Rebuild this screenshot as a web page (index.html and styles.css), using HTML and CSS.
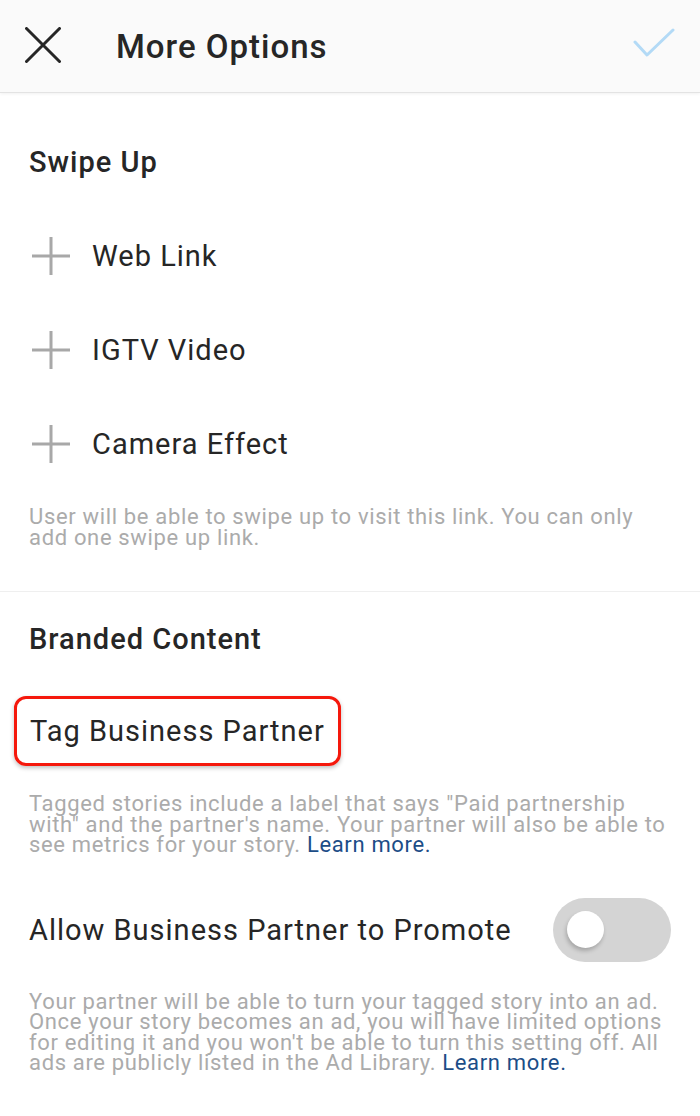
FILE: index.html
```html
<!DOCTYPE html>
<html lang="en">
<head>
<meta charset="utf-8">
<title>More Options</title>
<link rel="stylesheet" href="styles.css">
</head>
<body>
<div class="screen">
  <header class="topbar">
    <svg class="close" width="36" height="36" viewBox="0 0 36 36" aria-hidden="true">
      <path d="M1.5 1.5 L34.5 34.5 M34.5 1.5 L1.5 34.5" stroke="#262626" stroke-width="3" stroke-linecap="round" fill="none"/>
    </svg>
    <h1 class="title">More Options</h1>
    <svg class="done" width="42" height="30" viewBox="0 0 42 30" aria-hidden="true">
      <path d="M2 14 L14 27 L40 2" stroke="#b3daf6" stroke-width="3" stroke-linecap="round" stroke-linejoin="round" fill="none"/>
    </svg>
  </header>

  <section class="section">
    <h2 class="heading">Swipe Up</h2>
    <div class="row add">
      <svg class="plus" width="40" height="40" viewBox="0 0 40 40" aria-hidden="true"><path d="M20 1 V39 M1 20 H39" stroke="#a8a8a8" stroke-width="3" fill="none"/></svg>
      <span>Web Link</span>
    </div>
    <div class="row add">
      <svg class="plus" width="40" height="40" viewBox="0 0 40 40" aria-hidden="true"><path d="M20 1 V39 M1 20 H39" stroke="#a8a8a8" stroke-width="3" fill="none"/></svg>
      <span>IGTV Video</span>
    </div>
    <div class="row add">
      <svg class="plus" width="40" height="40" viewBox="0 0 40 40" aria-hidden="true"><path d="M20 1 V39 M1 20 H39" stroke="#a8a8a8" stroke-width="3" fill="none"/></svg>
      <span>Camera Effect</span>
    </div>
    <p class="help first">User will be able to swipe up to visit this link. You can only add one swipe up link.</p>
  </section>

  <section class="section branded">
    <h2 class="heading">Branded Content</h2>
    <div class="tag-wrap">
      <div class="tag-box">Tag Business Partner</div>
    </div>
    <p class="help tagged">Tagged stories include a label that says "Paid partnership with" and the partner's name. Your partner will also be able to see metrics for your story. <a class="link">Learn more.</a></p>
    <div class="row toggle-row">
      <span>Allow Business Partner to Promote</span>
      <div class="switch"><div class="knob"></div></div>
    </div>
    <p class="help last">Your partner will be able to turn your tagged story into an ad. Once your story becomes an ad, you will have limited options for editing it and you won't be able to turn this setting off. All ads are publicly listed in the Ad Library. <a class="link">Learn more.</a></p>
  </section>
</div>
</body>
</html>
```
FILE: styles.css
```css
* { box-sizing: border-box; }
html, body { margin: 0; padding: 0; background: #ffffff; }
body {
  font-family: Roboto, "Noto Sans", "Liberation Sans", sans-serif;
  color: #262626;
  width: 700px;
}
.screen { width: 700px; min-height: 1116px; background: #fff; }

.topbar {
  height: 93px;
  background: #fafafa;
  border-bottom: 1px solid #e3e3e3;
  box-shadow: 0 1px 3px rgba(0, 0, 0, 0.06);
  display: flex;
  align-items: center;
  padding: 0 25px 0 25px;
}
.close { flex: none; margin-top: -2px; }
.title {
  margin: 0 0 0 55px;
  font-size: 33px;
  font-weight: 500;
  color: #262626;
  flex: 1;
  letter-spacing: 1px;
}
.done { flex: none; margin-top: -6px; }

.section { padding: 22px 0 0; }
.heading {
  margin: 0;
  height: 94px;
  display: flex;
  align-items: center;
  padding-left: 29px;
  font-size: 29px;
  font-weight: 500;
  letter-spacing: 1px;
  color: #262626;
}
.row {
  height: 94px;
  display: flex;
  align-items: center;
  font-size: 29px;
  letter-spacing: 1px;
  padding: 0 29px;
}
.add .plus { flex: none; margin-left: 2px; margin-right: 21px; }

.help {
  margin: 0;
  padding: 0 24px 0 29px;
  font-size: 22px;
  line-height: 20.5px;
  letter-spacing: 0.66px;
  color: #ababab;
}
.help.first { margin-top: 16px; padding-bottom: 43px; border-bottom: 1px solid #efefef; }
.branded { padding-top: 0; }
.link { color: #1c4d87; text-decoration: none; }

.tag-wrap { padding: 10px 0 0 14px; }
.tag-box {
  display: inline-flex;
  align-items: center;
  height: 70px;
  padding: 0 13px 0 13px;
  border: 3.5px solid #f5180c;
  border-radius: 12px;
  font-size: 29px;
  letter-spacing: 1px;
  color: #262626;
  box-shadow: 0 2px 4px rgba(0, 0, 0, 0.25);
}
.help.tagged { margin-top: 28px; }

.toggle-row { justify-content: space-between; margin-top: 27px; }
.switch {
  flex: none;
  width: 118px;
  height: 64px;
  border-radius: 32px;
  background: #d4d4d4;
  display: flex;
  align-items: center;
  padding-left: 14px;
}
.knob {
  width: 37px;
  height: 37px;
  border-radius: 50%;
  background: #fff;
  box-shadow: -1px 3px 4px rgba(0, 0, 0, 0.22);
}
.help.last { margin-top: 15px; }
```
